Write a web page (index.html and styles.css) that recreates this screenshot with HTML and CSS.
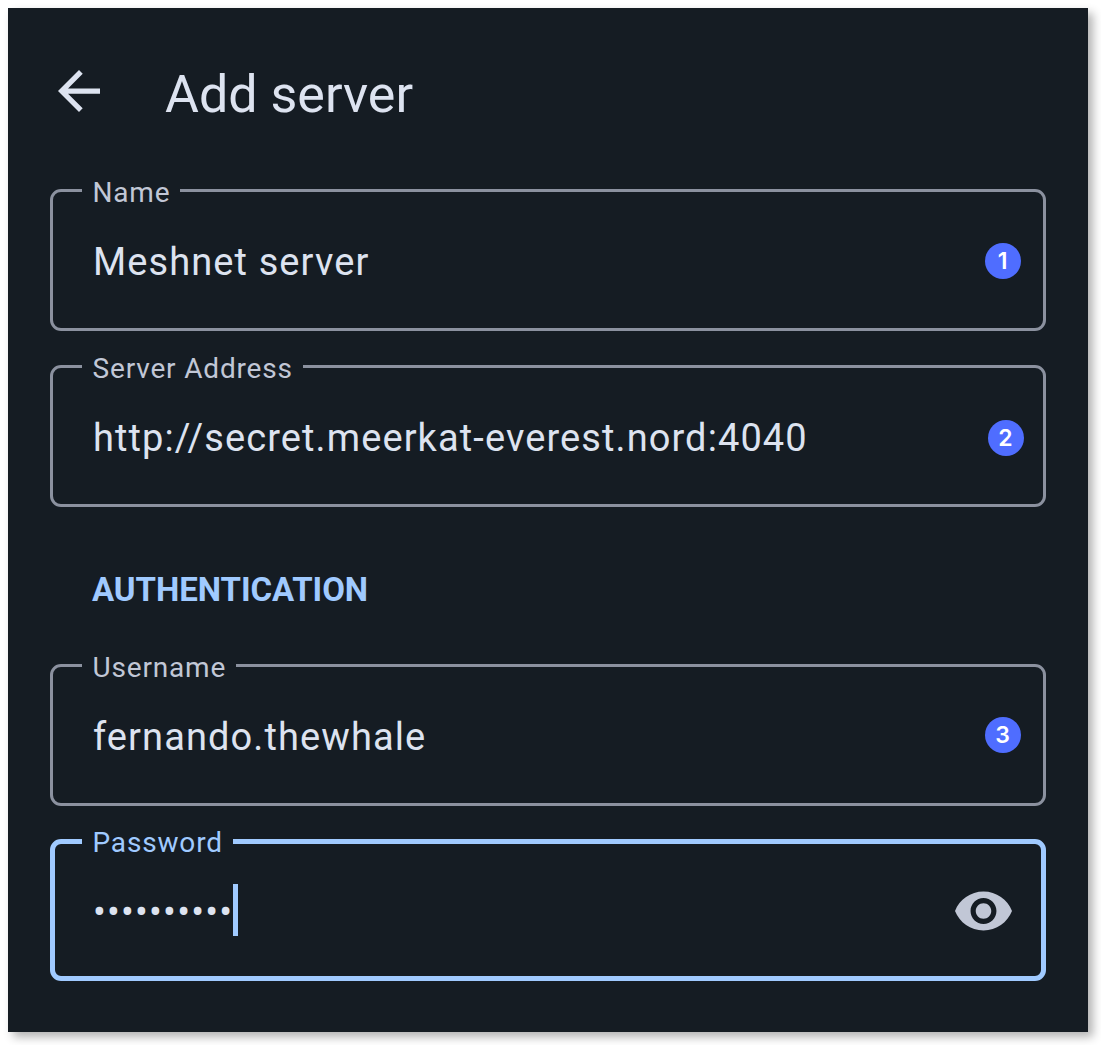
FILE: index.html
```html
<!DOCTYPE html>
<html lang="en">

<head>
    <meta charset="utf-8">
    <title>Add server</title>
    <link rel="stylesheet" href="styles.css">
</head>

<body>
    <div class="screen">
        <header class="topbar">
            <svg class="back" viewBox="4 4 16 16">
                <path d="M20 11H7.83l5.59-5.59L12 4l-8 8 8 8 1.41-1.41L7.83 13H20v-2z" />
            </svg>
            <h1>Add server</h1>
        </header>

        <div class="group">
            <div class="field">
                <label>Name</label>
                <span class="value">Meshnet server</span>
                <span class="badge">1</span>
            </div>
            <div class="field address">
                <label>Server Address</label>
                <span class="value">http://secret.meerkat-everest.nord:4040</span>
                <span class="badge">2</span>
            </div>
        </div>

        <h2>AUTHENTICATION</h2>

        <div class="group auth">
            <div class="field username">
                <label>Username</label>
                <span class="value">fernando.thewhale</span>
                <span class="badge">3</span>
            </div>
            <div class="field focus">
                <label>Password</label>
                <span class="value dots">••••••••••</span>
                <span class="caret"></span>
                <svg class="eye" viewBox="1 4.5 22 15">
                    <path d="M12 4.5C7 4.5 2.73 7.61 1 12c1.73 4.39 6 7.5 11 7.5s9.27-3.11 11-7.5c-1.73-4.39-6-7.5-11-7.5zM12 17c-2.76 0-5-2.24-5-5s2.24-5 5-5 5 2.24 5 5-2.24 5-5 5zm0-8c-1.66 0-3 1.34-3 3s1.34 3 3 3 3-1.34 3-3-1.34-3-3-3z" />
                </svg>
            </div>
        </div>
    </div>
</body>

</html>
```
FILE: styles.css
```css
body {
    box-sizing: border-box;
    min-height: 100vh;
    margin: 0;
    padding: 8px;
    background: #fff;
    font-family: Roboto, "Liberation Sans", sans-serif;
    color: #dde3f0;
}

.screen {
    box-sizing: border-box;
    width: 1080px;
    height: 1024px;
    padding: 52px 42px 0;
    background: #151c23;
    box-shadow: 5px 5px 9px rgba(0, 0, 0, 0.3);
}

.topbar {
    display: flex;
    align-items: center;
    height: 64px;
    padding-left: 8px;
    margin-bottom: 65px;
}

.back {
    width: 42px;
    height: 42px;
    margin-bottom: 2px;
    fill: #dde3f0;
}

h1 {
    margin: 6px 0 0 65px;
    font-size: 52px;
    font-weight: 400;
    line-height: 60px;
}

.group {
    display: flex;
    flex-direction: column;
    gap: 34px;
}

.auth {
    gap: 33px;
}

.field {
    position: relative;
    box-sizing: border-box;
    display: flex;
    align-items: center;
    height: 142px;
    padding: 0 22px 0 40px;
    border: 3px solid #8b919f;
    border-radius: 11px;
}

/* label sits on the border and cuts a notch into it */
.field label {
    position: absolute;
    top: -16px;
    left: 29px;
    padding: 0 10px 0 10.5px;
    background: #151c23;
    color: #c1c7d6;
    font-size: 28px;
    line-height: 34px;
    letter-spacing: 0.83px;
}

.value {
    font-size: 38px;
    line-height: 52px;
    letter-spacing: 1.1px;
    padding-top: 3px;
}

.dots {
    letter-spacing: 1.2px;
}

.badge {
    box-sizing: border-box;
    width: 36px;
    height: 36px;
    margin: 2px 0 0 auto;
    padding-right: 1px;
    border-radius: 50%;
    background: #4f6dff;
    color: #fff;
    font: 600 23px/36px Inter, sans-serif;
    text-align: center;
}

.address {
    padding-right: 19px;
}

.address .badge {
    margin-top: 4px;
}

.username .badge {
    margin-top: 0;
}

h2 {
    margin: 63px 0 54px 42px;
    font-size: 33px;
    font-weight: 700;
    line-height: 40px;
    letter-spacing: -0.05px;
    color: #a0caff;
}

.focus {
    padding: 0 29px 0 38px;
    border: 5px solid #a0caff;
}

.focus label {
    top: -18px;
    left: 27px;
    color: #a0caff;
}

.caret {
    width: 5px;
    height: 52px;
    background: #a0caff;
}

.eye {
    width: 57px;
    height: 40px;
    margin: 1px 0 0 auto;
    fill: #c1c7d6;
}
```
